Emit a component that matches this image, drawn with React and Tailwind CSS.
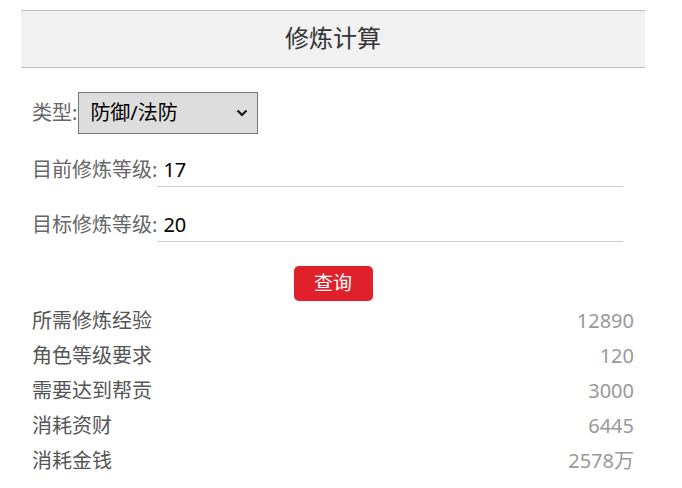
import React from "react";

const font = { fontFamily: '"Noto Sans", "Noto Sans CJK SC", sans-serif' };

function Row({ label, value }) {
  return (
    <div className="flex h-[35px] items-center justify-between text-[20px] leading-none">
      <span className="text-[#555]">{label}</span>
      <span className="text-[#999]">{value}</span>
    </div>
  );
}

function Field({ label, value }) {
  return (
    <div className="flex items-center">
      <span className="text-[20px] leading-none text-[#666]">{label}</span>
      <div className="flex h-[34px] w-[466px] items-center border-b border-[#ccc] pl-[6px] text-[20px] leading-none text-black">
        {value}
      </div>
    </div>
  );
}

export default function App() {
  return (
    <div className="min-h-[488px] bg-white pl-[21px] pr-[37px] pt-[10px]" style={font}>
      <div className="flex h-[58px] items-center justify-center border-y border-[#bdbdbd] bg-[#f1f1f1] pb-[2px] text-[24px] leading-none text-[#333]">
        修炼计算
      </div>
      <div className="px-[11px]">
        <div className="mt-[24px] flex items-center">
          <span className="text-[20px] leading-none text-[#666]">类型:</span>
          <div className="ml-[1px] flex h-[42px] w-[180px] items-center justify-between border border-[#767676] bg-[#dddddd] pl-[11px] pr-[9px] text-[20px] leading-none text-black">
            <span>防御/法防</span>
            <svg width="12" height="8" viewBox="0 0 12 8" fill="none">
              <path d="M1.5 1.5 L6 6 L10.5 1.5" stroke="#111" strokeWidth="2.2" />
            </svg>
          </div>
        </div>
        <div className="mt-[19px]">
          <Field label="目前修炼等级:" value="17" />
        </div>
        <div className="mt-[21px]">
          <Field label="目标修炼等级:" value="20" />
        </div>
        <div className="mt-[24px] flex justify-center">
          <div className="flex h-[35px] w-[79px] items-center justify-center rounded-[5px] bg-[#e0202a] text-[19px] leading-none text-white">
            查询
          </div>
        </div>
        <div className="mt-[2px]">
          <Row label="所需修炼经验" value="12890" />
          <Row label="角色等级要求" value="120" />
          <Row label="需要达到帮贡" value="3000" />
          <Row label="消耗资财" value="6445" />
          <Row label="消耗金钱" value="2578万" />
        </div>
      </div>
    </div>
  );
}
